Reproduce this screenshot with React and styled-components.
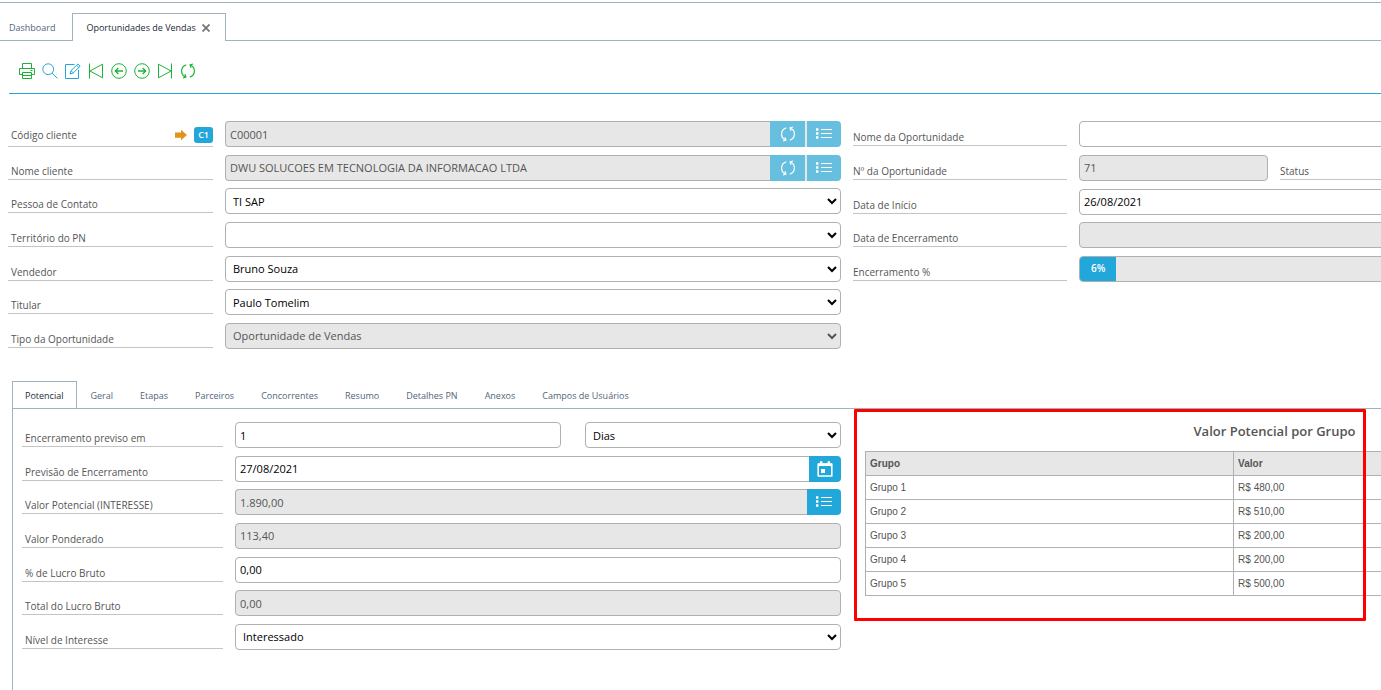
import styled, { createGlobalStyle } from 'styled-components'

const TOP_TABS = ['Dashboard', 'Oportunidades de Vendas']
const DETAIL_TABS = [
	'Potencial',
	'Geral',
	'Etapas',
	'Parceiros',
	'Concorrentes',
	'Resumo',
	'Detalhes PN',
	'Anexos',
	'Campos de Usuários',
]
const GROUPS = [
	{ name: 'Grupo 1', value: 'R$ 480,00' },
	{ name: 'Grupo 2', value: 'R$ 510,00' },
	{ name: 'Grupo 3', value: 'R$ 200,00' },
	{ name: 'Grupo 4', value: 'R$ 200,00' },
	{ name: 'Grupo 5', value: 'R$ 500,00' },
]
const PROGRESS = 6

const Icon = ({ children, size = 16 }) => (
	<svg
		width={size}
		height={size}
		viewBox="0 0 16 16"
		fill="none"
		stroke="currentColor"
		strokeWidth="1"
		aria-hidden="true"
	>
		{children}
	</svg>
)

const PrintIcon = () => (
	<Icon>
		<path d="M3.5 5.5v-5h9v5M3.5 11.5h-3v-6h15v6h-3M3.5 9.5h9v6h-9zM3.5 12.5h9M11.5 7.5h2" />
	</Icon>
)
const SearchIcon = () => (
	<Icon>
		<circle cx="6.2" cy="6.2" r="5.4" />
		<path d="M10.2 10.2l5.2 5.2" />
	</Icon>
)
const EditIcon = () => (
	<Icon>
		<path d="M9.5 1.5h-9v14h13V7" />
		<path d="M5 11l1-3.3L13 .9l2.2 2.2-6.9 6.8zM6 7.7l2.3 2.2M11.6 2.3l2.2 2.2" />
	</Icon>
)
const FirstIcon = () => (
	<Icon>
		<path d="M1.5.5v15M14.5 1.2v13.6L2 8z" />
	</Icon>
)
const LastIcon = () => (
	<Icon>
		<path d="M14.5.5v15M1.5 1.2v13.6L14 8z" />
	</Icon>
)
const PrevIcon = () => (
	<Icon>
		<circle cx="8" cy="8" r="7.3" />
		<path d="M12 8H4.5M7.3 5L4.3 8l3 3" strokeWidth="1.3" />
	</Icon>
)
const NextIcon = () => (
	<Icon>
		<circle cx="8" cy="8" r="7.3" />
		<path d="M4 8h7.5M8.7 5l3 3-3 3" strokeWidth="1.3" />
	</Icon>
)
const RefreshIcon = () => (
	<Icon>
		<path
			d="M6.2 1.9A6.4 6.4 0 0 0 5.2 13.8M9.8 14.1A6.4 6.4 0 0 0 10.8 2.2"
			strokeWidth="1.2"
		/>
		<path d="M3 15l2.9-.9-.9-2.9M13 1l-2.9.9.9 2.9" strokeWidth="1.2" />
	</Icon>
)
const ListIcon = () => (
	<Icon>
		<path d="M5 3.5h11M5 7.5h11M5 11.5h11" strokeWidth="1.2" />
		<path d="M0 3.5h2.4M0 7.5h2.4M0 11.5h2.4" strokeWidth="2.4" />
	</Icon>
)
const CalendarIcon = () => (
	<Icon>
		<path d="M1.2 3h13.6v12H1.2z" strokeWidth="1.6" strokeLinejoin="round" />
		<path d="M1 3.8h14M4.2.2v3M11.8.2v3" strokeWidth="2.4" />
		<path d="M4 8h4v4H4z" fill="currentColor" stroke="none" />
	</Icon>
)
const ArrowIcon = () => (
	<Icon size={12}>
		<path d="M0 4.5h8V1l8 7-8 7v-3.5H0z" fill="#e0941b" stroke="none" />
	</Icon>
)
const CloseIcon = () => (
	<Icon size={8}>
		<path d="M1 1l14 14M15 1L1 15" strokeWidth="3.6" />
	</Icon>
)

const TextField = ({ id, label, value = '', readOnly, children }) => (
	<Row>
		<Label htmlFor={id}>{label}</Label>
		<Group>
			<Input id={id} defaultValue={value} readOnly={readOnly} $joined={!!children} />
			{children}
		</Group>
	</Row>
)

const SelectField = ({ id, label, value = '', disabled }) => (
	<Row>
		<Label htmlFor={id}>{label}</Label>
		<Select id={id} defaultValue={value} disabled={disabled}>
			<option>{value}</option>
		</Select>
	</Row>
)

const FieldActions = () => (
	<>
		<FieldButton type="button" aria-label="Atualizar" $faded>
			<RefreshIcon />
		</FieldButton>
		<FieldButton type="button" aria-label="Lista" $faded $last>
			<ListIcon />
		</FieldButton>
	</>
)

const App = () => {
	return (
		<Page>
			<GlobalStyle />
			<Content>
				<TopTabs>
					{TOP_TABS.map((tab, index) => (
						<TopTab key={tab} $active={index === 1}>
							<TabButton type="button">{tab}</TabButton>
							{index === 1 && (
								<CloseButton type="button" aria-label="Fechar">
									<CloseIcon />
								</CloseButton>
							)}
						</TopTab>
					))}
				</TopTabs>

				<Toolbar>
					<ToolButton type="button" aria-label="Imprimir">
						<PrintIcon />
					</ToolButton>
					<ToolButton type="button" aria-label="Pesquisar" $blue>
						<SearchIcon />
					</ToolButton>
					<ToolButton type="button" aria-label="Editar" $blue>
						<EditIcon />
					</ToolButton>
					<ToolButton type="button" aria-label="Primeiro">
						<FirstIcon />
					</ToolButton>
					<ToolButton type="button" aria-label="Anterior">
						<PrevIcon />
					</ToolButton>
					<ToolButton type="button" aria-label="Próximo">
						<NextIcon />
					</ToolButton>
					<ToolButton type="button" aria-label="Último">
						<LastIcon />
					</ToolButton>
					<ToolButton type="button" aria-label="Recarregar">
						<RefreshIcon />
					</ToolButton>
				</Toolbar>

				<Header>
					<Fields $rows={7} $label={205}>
						<Row>
							<LinkLabel>
								<label htmlFor="codigo">Código cliente</label>
								<ArrowIcon />
								<Badge>C1</Badge>
							</LinkLabel>
							<Group>
								<Input id="codigo" defaultValue="C00001" readOnly $joined />
								<FieldActions />
							</Group>
						</Row>
						<TextField
							id="nome"
							label="Nome cliente"
							value="DWU SOLUCOES EM TECNOLOGIA DA INFORMACAO LTDA"
							readOnly
						>
							<FieldActions />
						</TextField>
						<SelectField id="contato" label="Pessoa de Contato" value="TI SAP" />
						<SelectField id="territorio" label="Território do PN" />
						<SelectField id="vendedor" label="Vendedor" value="Bruno Souza" />
						<SelectField id="titular" label="Titular" value="Paulo Tomelim" />
						<SelectField
							id="tipo"
							label="Tipo da Oportunidade"
							value="Oportunidade de Vendas"
							disabled
						/>
					</Fields>

					<Fields $rows={5} $label={214} $flush>
						<TextField id="oportunidade" label="Nome da Oportunidade" />
						<Row>
							<Label htmlFor="numero">Nº da Oportunidade</Label>
							<Trio>
								<Input id="numero" defaultValue="71" readOnly />
								<Label htmlFor="status">Status</Label>
								<Select id="status" />
							</Trio>
						</Row>
						<TextField id="inicio" label="Data de Início" value="26/08/2021" />
						<TextField id="encerramento" label="Data de Encerramento" readOnly />
						<Row>
							<Label as="span" id="percentual">
								Encerramento %
							</Label>
							<Progress
								role="progressbar"
								aria-labelledby="percentual"
								aria-valuenow={PROGRESS}
							>
								<ProgressFill style={{ width: `${PROGRESS}%` }}>{PROGRESS}%</ProgressFill>
							</Progress>
						</Row>
					</Fields>
				</Header>

				<Details>
					<DetailTabs>
						{DETAIL_TABS.map((tab, index) => (
							<DetailTab key={tab} type="button" $active={index === 0}>
								{tab}
							</DetailTab>
						))}
					</DetailTabs>
					<Panel>
						<Fields $rows={7} $label={201}>
							<Row>
								<Label htmlFor="previsto">Encerramento previso em</Label>
								<Pair>
									<Input id="previsto" defaultValue="1" />
									<Select aria-label="Unidade" defaultValue="Dias">
										<option>Dias</option>
									</Select>
								</Pair>
							</Row>
							<TextField id="previsao" label="Previsão de Encerramento" value="27/08/2021">
								<FieldButton type="button" aria-label="Calendário" $narrow $last>
									<CalendarIcon />
								</FieldButton>
							</TextField>
							<TextField
								id="potencial"
								label="Valor Potencial (INTERESSE)"
								value="1.890,00"
								readOnly
							>
								<FieldButton type="button" aria-label="Lista" $last>
									<ListIcon />
								</FieldButton>
							</TextField>
							<TextField id="ponderado" label="Valor Ponderado" value="113,40" readOnly />
							<TextField id="lucro" label="% de Lucro Bruto" value="0,00" />
							<TextField id="total" label="Total do Lucro Bruto" value="0,00" readOnly />
							<SelectField id="interesse" label="Nível de Interesse" value="Interessado" />
						</Fields>

						<Potential>
							<PotentialTitle>Valor Potencial por Grupo</PotentialTitle>
							<Table>
								<thead>
									<tr>
										<th>Grupo</th>
										<th>Valor</th>
									</tr>
								</thead>
								<tbody>
									{GROUPS.map(({ name, value }) => (
										<tr key={name}>
											<td>{name}</td>
											<td>{value}</td>
										</tr>
									))}
								</tbody>
							</Table>
							<Highlight />
						</Potential>
					</Panel>
				</Details>
			</Content>
		</Page>
	)
}

export default App

const GlobalStyle = createGlobalStyle`
	* {
		box-sizing: border-box;
	}
	body {
		margin: 0;
		background: #fff;
		color: #555;
		font-family: 'Open Sans', 'Noto Sans', sans-serif;
		font-size: 10px;
	}
	button, input, select {
		margin: 0;
		font-family: inherit;
	}
	svg {
		display: block;
		flex-shrink: 0;
	}
`

const Page = styled.div`
	min-height: 100vh;
	display: flex;
	overflow: hidden;
`

/* the form is wider than the window and runs out on the right */
const Content = styled.main`
	flex: 0 0 calc(100% + 313px);
	display: flex;
	flex-direction: column;
	margin-top: 2px;
	border-top: 1px solid #a0b3bd;
`

const TopTabs = styled.nav`
	display: flex;
	height: 38px;
	padding-top: 10px;

	&::after {
		content: '';
		flex: 1;
		border-bottom: 1px solid #a0b3bd;
	}
`

const TopTab = styled.div`
	display: flex;
	align-items: center;
	gap: 6px;
	padding: ${({ $active }) => ($active ? '0 15px 0 13px' : '2px 17px 0 9px')};
	border: 1px solid #a0b3bd;
	border-width: ${({ $active }) => ($active ? '1px 1px 0' : '0 0 1px')};
	color: ${({ $active }) => ($active ? '#1d2b36' : '#50657a')};
`

const TabButton = styled.button`
	padding: 0;
	border: 0;
	background: none;
	color: inherit;
	font-size: 9px;
	line-height: 14px;
`

const CloseButton = styled.button`
	padding: 0;
	border: 0;
	background: none;
	color: #777;
`

const Toolbar = styled.div`
	display: flex;
	gap: 7px;
	margin-left: 9px;
	padding: 22px 0 14px 10px;
	border-bottom: 1px solid #22a7db;
`

const ToolButton = styled.button`
	padding: 0;
	border: 0;
	background: none;
	color: ${({ $blue }) => ($blue ? '#22a7db' : '#1cb237')};
`

const Header = styled.section`
	display: grid;
	grid-template-columns: minmax(0, 1fr) minmax(0, 1fr);
	align-items: start;
	gap: 12px;
	padding: 27px 8px 32px;
`

const Fields = styled.div`
	display: grid;
	align-content: space-between;
	min-height: ${({ $rows }) => ($rows === 7 ? 228 : 161)}px;
	--label: ${({ $label }) => $label}px;
	--inset: ${({ $flush }) => ($flush ? 0 : 3)}px;
`

const Row = styled.div`
	display: grid;
	grid-template-columns: var(--label) minmax(0, 1fr);
	gap: 12px;
	height: 26px;
`

const Label = styled.label`
	display: flex;
	align-items: flex-end;
	height: 25px;
	padding: 0 0 1px var(--inset);
	border-bottom: 1px solid #c4c4c4;
	font-size: 10px;
	line-height: 14px;
	white-space: nowrap;
`

const LinkLabel = styled.div`
	display: flex;
	align-items: center;
	gap: 7px;
	padding: 3px 0 0 var(--inset);
	border-bottom: 1px solid #c4c4c4;
	line-height: 14px;

	label {
		flex: 1;
	}
`

const Badge = styled.span`
	padding: 1px 4px;
	border-radius: 3px;
	background: #22a7db;
	color: #fff;
	font-size: 9px;
	font-weight: 600;
	line-height: 14px;
`

const Group = styled.div`
	display: flex;
`

const Pair = styled.div`
	display: grid;
	grid-template-columns: minmax(0, 1fr) 256px;
	gap: 24px;
`

const Trio = styled.div`
	display: grid;
	grid-template-columns: 189px 205px minmax(0, 1fr);
	gap: 12px;
`

const Input = styled.input`
	flex: 1;
	width: 100%;
	min-width: 0;
	height: 26px;
	padding: 0 4px;
	border: 1px solid #b0b0b0;
	border-right-width: ${({ $joined }) => ($joined ? 0 : 1)}px;
	border-radius: ${({ $joined }) => ($joined ? '4px 0 0 4px' : '4px')};
	background: ${({ readOnly }) => (readOnly ? '#e7e7e7' : '#fff')};
	color: ${({ readOnly }) => (readOnly ? '#555' : '#000')};
	font-size: 11px;
`

const Select = styled.select`
	width: 100%;
	height: 26px;
	padding: 0 3px;
	border: 1px solid #b0b0b0;
	border-radius: 4px;
	background: #fff;
	color: #000;
	font-size: 11px;

	&:disabled {
		background: #e7e7e7;
		color: #555;
		opacity: 1;
	}
`

const FieldButton = styled.button`
	display: flex;
	align-items: center;
	justify-content: center;
	width: ${({ $narrow, $last }) => ($narrow ? 32 : $last ? 34 : 37)}px;
	height: 26px;
	padding: 0;
	border: 0;
	border-right: ${({ $last }) => ($last ? '0' : '2px solid #e7e7e7')};
	border-radius: ${({ $last }) => ($last ? '0 4px 4px 0' : 0)};
	background: ${({ $faded }) => ($faded ? '#66bfde' : '#22a7db')};
	color: #fff;
`

const Progress = styled.div`
	display: flex;
	height: 26px;
	border: 1px solid #b0b0b0;
	border-radius: 4px;
	background: #e7e7e7;
	overflow: hidden;
`

const ProgressFill = styled.div`
	background: #22a7db;
	color: #fff;
	font-weight: 600;
	line-height: 22px;
	text-align: center;
`

const Details = styled.section`
	flex: 1;
	display: flex;
	flex-direction: column;
	margin: 0 8px 0 12px;
`

const DetailTabs = styled.nav`
	display: flex;
	height: 28px;
	border-bottom: 1px solid #a0b3bd;
`

const DetailTab = styled.button`
	height: ${({ $active }) => ($active ? 28 : 27)}px;
	padding: ${({ $active }) => ($active ? '0 13px 0 12px' : '1px 13px 0 12px')};
	border: 1px solid ${({ $active }) => ($active ? '#a0b3bd' : 'transparent')};
	border-bottom: 0;
	background: none;
	color: ${({ $active }) => ($active ? '#1d2b36' : '#50657a')};
	font-size: 9px;
`

const Panel = styled.div`
	flex: 1;
	display: grid;
	grid-template-columns: minmax(0, 1fr) minmax(0, 1fr);
	align-items: start;
	gap: 24px;
	padding: 13px 2px 40px 9px;
	border-left: 1px solid #a0b3bd;
`

const Potential = styled.div`
	position: relative;
`

const PotentialTitle = styled.h2`
	margin: 0 0 11px;
	font-size: 13px;
	font-weight: 600;
	line-height: 18px;
	text-align: center;
`

const Table = styled.table`
	width: 100%;
	border-collapse: collapse;
	table-layout: fixed;
	font-family: 'Liberation Sans', Arial, sans-serif;
	font-size: 10px;

	th, td {
		height: 24px;
		padding: 0 4px;
		border: 1px solid #b0b0b0;
		text-align: left;
	}
	th {
		background: #e7e7e7;
	}
	th:first-child {
		width: 45%;
	}
`

const Highlight = styled.div`
	position: absolute;
	top: -13px;
	left: -11px;
	width: 512px;
	height: 212px;
	border: 3px solid #f00;
	border-radius: 1px;
	pointer-events: none;
`
